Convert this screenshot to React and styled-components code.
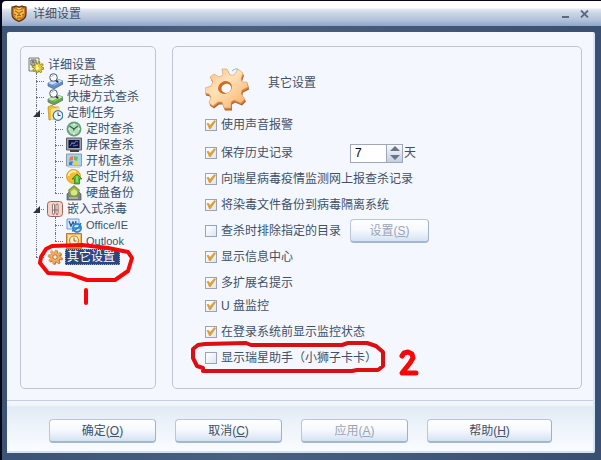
import React, { useState } from "react";
import styled, { createGlobalStyle, css } from "styled-components";

const ink = "#3f5068";
const faded = "#9aa5b6";
const line = "#c0c4d6";

const GlobalStyle = createGlobalStyle`
  *, *::before, *::after { box-sizing: border-box; }
  body {
    margin: 0;
    background: #06061a;
    color: ${ink};
    font: 12px/16px "Liberation Sans", "Noto Sans CJK SC", sans-serif;
  }
  button, input { font: inherit; color: inherit; }
`;

const Window = styled.div`
  display: flex;
  flex-direction: column;
  min-height: 100vh;
  padding-top: 1px;
`;

const TitleBar = styled.header`
  display: flex;
  align-items: center;
  gap: 6px;
  height: 25px;
  margin-left: 2px;
  padding: 0 11px 0 9px;
  border-radius: 4px 0 0 0;
  background: linear-gradient(#ffffff 0, #ffffff 7px, #e4e9f2 8px, #ccd5e5 12px, #b3c2d9 19px, #8ea7ca 25px);
`;

const TitleText = styled.h1`
  flex: 1;
  margin: 0;
  font-size: 12px;
  font-weight: normal;
`;

const CaptionButton = styled.button`
  display: grid;
  place-items: center;
  width: 12px;
  height: 16px;
  padding: 0;
  border: 0;
  background: none;
`;

const Frame = styled.div`
  flex: 1;
  display: flex;
  flex-direction: column;
  padding: 6px 6px 7px 5px;
  margin-left: 2px;
  background: linear-gradient(90deg, #3d5373, #49607f 40%, #3b5070);
`;

const Sheet = styled.main`
  flex: 1;
  display: flex;
  flex-direction: column;
  border-radius: 2px;
  border-right: 2px solid #d3e7fa;
  background: #f4f8fe;
`;

const Columns = styled.div`
  flex: 1;
  display: flex;
  gap: 16px;
  padding: 14px 11px 11px 13px;
`;

const Sidebar = styled.nav`
  flex: 0 0 136px;
  padding: 10px 7px;
  border: 1px solid ${line};
  border-radius: 5px;
`;

const Panel = styled.section`
  flex: 1;
  min-width: 0;
  padding: 21px 0 19px 32px;
  border: 1px solid ${line};
  border-radius: 5px;
`;

const TreeList = styled.ul`
  list-style: none;
  margin: 0;
  margin-left: ${(p) => (p.$level === 0 ? 0 : p.$level === 1 ? 8 : 19)}px;
  padding: 0;
`;

const TreeItem = styled.li`
  position: relative;
  ${(p) => p.$level > 0 && css`
    &::before {
      content: "";
      position: absolute;
      left: 0;
      top: 0;
      bottom: 0;
      border-left: 1px dotted #6d7585;
    }
    &:last-child::before { bottom: auto; height: 8px; }
    > div::before {
      content: "";
      flex: 0 0 8px;
      margin-right: 3px;
      border-top: 1px dotted #6d7585;
    }
  `}
`;

const TreeRow = styled.div`
  position: relative;
  display: flex;
  align-items: center;
  height: 16px;
  white-space: nowrap;
`;

const TreeLabel = styled.a`
  height: 16px;
  margin-left: 2px;
  padding: 0 2px;
  color: inherit;
  text-decoration: none;
  font-size: ${(p) => (p.$latin ? 11 : 12)}px;
  ${(p) => p.$selected && css`
    padding-right: 5px;
    color: #fff;
    background: #2b4680;
    outline: 1px dotted #b4a87b;
    outline-offset: -1px;
  `}
`;

const Expander = styled.button`
  position: absolute;
  left: -3px;
  top: 5px;
  width: 7px;
  height: 7px;
  padding: 0;
  border: 0;
  background: #2d333e;
  clip-path: polygon(100% 0, 100% 100%, 0 100%);
`;

const PanelHead = styled.div`
  display: flex;
  gap: 18px;
  height: 42px;
  margin-bottom: 4px;
`;

const PanelTitle = styled.h2`
  margin: 0;
  font-size: 12px;
  font-weight: normal;
  line-height: 30px;
`;

const OptionGroup = styled.div`
  display: flex;
  flex-direction: column;
  gap: 4px;
  margin-top: ${(p) => p.$space}px;
`;

const OptionRow = styled.div`
  position: relative;
  display: flex;
  align-items: center;
  height: 22px;
  white-space: nowrap;
`;

const Option = styled.label`
  display: flex;
  align-items: center;
  gap: 4px;
  min-width: 145px;
`;

const CheckBox = styled.input`
  appearance: none;
  display: block;
  width: 12px;
  height: 12px;
  margin: 0;
  border: 1px solid #9aa3bb;
  background: linear-gradient(135deg, #ffffff, #dfe6f1);
  &:checked::after {
    content: "";
    display: block;
    width: 10px;
    height: 9px;
    background: #dca13c;
    clip-path: polygon(5% 36%, 26% 32%, 40% 56%, 85% 0, 100% 14%, 46% 100%, 32% 100%);
  }
`;

const Spinner = styled.span`
  display: flex;
  width: 53px;
  height: 19px;
  margin-right: 1px;
  border: 1px solid #a0a7bd;
  background: #fff;
`;

const SpinnerInput = styled.input`
  flex: 1;
  min-width: 0;
  padding: 0 4px;
  border: 0;
  outline: 0;
  background: none;
  color: #000;
`;

const Steps = styled.span`
  display: flex;
  flex-direction: column;
  width: 16px;
  border-left: 1px solid #a0a7bd;
  background: linear-gradient(#f8fafd, #c3cfe0);
`;

const Step = styled.button`
  flex: 1;
  display: grid;
  place-items: center;
  padding: 0;
  border: 0;
  background: none;
  &::after {
    content: "";
    border: 5px solid transparent;
    border-top-width: ${(p) => (p.$up ? 0 : 5)}px;
    border-bottom-width: ${(p) => (p.$up ? 5 : 0)}px;
    border-${(p) => (p.$up ? "bottom" : "top")}-color: #66748c;
  }
`;

const Button = styled.button`
  flex: 0 1 ${(p) => p.$width || 107}px;
  height: 24px;
  padding: 0 4px;
  border: 1px solid #b9c7dc;
  border-right-color: #9fb0c9;
  border-bottom: 2px solid #a5b6cf;
  border-radius: 4px;
  background: linear-gradient(#ffffff, #f5f8fd 50%, #d5e2f2);
  white-space: nowrap;
  line-height: 16px;
  &:disabled { color: ${faded}; }
`;

const Footer = styled.footer`
  display: flex;
  gap: 19px;
  padding: 18px 41px 8px 42px;
  border-top: 1px solid #c3cee0;
  border-bottom: 2px solid #d5e2f0;
  background: linear-gradient(#f2f7fd 0, #f2f7fd 4px, #e1eaf5 6px, #edf3fa 25px, #fafcff 50px);
`;

const Marker = styled.svg`
  position: absolute;
  left: ${(p) => p.$left}px;
  top: ${(p) => p.$top}px;
  z-index: 2;
  pointer-events: none;
  fill: none;
  stroke-linecap: round;
  stroke-linejoin: round;
`;

const Glyph = styled.svg`
  flex: none;
  display: block;
`;

const gearPath = (cx, cy, outer, inner, teeth, turn = 0) => {
  const pts = [];
  const step = (Math.PI * 2) / teeth;
  for (let i = 0; i < teeth; i++) {
    [[-0.32, inner], [-0.2, outer], [0.2, outer], [0.32, inner]].forEach(([o, r]) => {
      const a = (i + o) * step + turn;
      pts.push(`${(cx + r * Math.cos(a)).toFixed(1)} ${(cy + r * Math.sin(a)).toFixed(1)}`);
    });
  }
  return `M${pts.join("L")}Z`;
};

function Drive({ base, top }) {
  return (
    <>
      <path d="M1 10L10 6L16 8V11L7 16L1 13Z" fill={base} stroke="#53677c" strokeWidth=".7" />
      <path d="M1 10L10 6L16 8L7 12.5Z" fill={top} />
      <path d="M4 13L12 9" stroke={base} />
      <path d="M8.5 7L11 9" stroke="#252c38" strokeWidth="1.8" />
      <circle cx="6.5" cy="4.5" r="3.8" fill="#f8fcff" stroke="#4d5966" />
      <path d="M4.5 4Q5 2 7 2" stroke="#a1c4df" fill="none" />
    </>
  );
}

const art = {
  root: (
    <>
      <path d="M1 1H11V14H1Z" fill="#ecefdd" stroke="#777c77" />
      <path d="M3 3H8V8H3Z" fill="#fff" stroke="#4c5863" />
      <path d="M4 5H7M5 3V7" stroke="#555" />
      <path d={gearPath(10, 10.5, 5.8, 3.8, 8, 0.2)} fill="#e7cf2c" stroke="#756813" strokeWidth=".7" />
      <path d="M9 8V12L11 11" stroke="#fffbd0" fill="none" strokeWidth="1.5" />
    </>
  ),
  manual: <Drive base="#628bcb" top="#c6dffa" />,
  quick: <Drive base="#63a847" top="#c8e8a6" />,
  tasks: (
    <>
      <path d="M1 2L5 0L7 2H12V13L2 15Z" fill="#f2bf35" stroke="#b98416" strokeWidth=".7" />
      <path d="M4 4L13 2V12L4 15Z" fill="#ffe47f" />
      <circle cx="11" cy="10.5" r="4.8" fill="#e9f5ff" stroke="#3c73b1" strokeWidth="1.2" />
      <path d="M11 7.5V10.5H13.5" stroke="#28446c" fill="none" />
    </>
  ),
  clock: (
    <>
      <circle cx="8" cy="8" r="7.5" fill="#6aa57c" />
      <circle cx="8" cy="8" r="6" fill="#b9dcc1" stroke="#479363" strokeWidth=".6" />
      <path d="M3.5 5L8 8L12 5M8 8L7.5 9.5" stroke="#2d6744" strokeWidth="1.3" fill="none" />
      <path d="M8 2.5V4M8 12V14M2.5 8H4M12 8H14" stroke="#fff" />
    </>
  ),
  screen: (
    <>
      <path d="M.5 1H15.5V13H.5Z" fill="#9fa4ab" stroke="#5b606c" />
      <path d="M2.5 3H13.5V11H2.5Z" fill="#11143b" />
      <path d="M4 9L6 6L8 7L10 4L12 5M5 6H9M7 9L12 8" stroke="#6576d5" fill="none" />
      <path d="M4 14H13" stroke="#40434a" strokeWidth="2" />
    </>
  ),
  boot: (
    <>
      <path d="M.5 1H15.5V13H.5Z" fill="#a9d2f1" stroke="#8d9aab" />
      <path d="M4 4L7 3L7 7L3 8Z" fill="#eb7652" /><path d="M8 3L12 4L11 8L8 7Z" fill="#75b75b" />
      <path d="M3 9L7 8L6 12L3 12Z" fill="#3980cf" /><path d="M8 8L11 9L11 12L7 12Z" fill="#f0cb52" />
      <path d="M2 14H14" stroke="#d1d7de" strokeWidth="2" />
    </>
  ),
  update: (
    <>
      <circle cx="7.5" cy="7.5" r="7" fill="#f4bc32" stroke="#c48917" strokeWidth=".7" />
      <path d="M2.5 7A5 5 0 0 1 10 3" stroke="#fff0a1" strokeWidth="2" fill="none" />
      <path d="M11 5L16 10H13.5V15H8.5V10H6Z" fill="#55bd35" stroke="#2d751d" strokeWidth=".7" />
      <path d="M11 7V13" stroke="#baf197" />
    </>
  ),
  backup: (
    <>
      <path d="M1 9L4 6H12L15 9V15H1Z" fill="#7b8185" stroke="#4b5557" strokeWidth=".7" />
      <path d="M8 0L14 5L11 12L4 12L2 5Z" fill="#7f9e3b" />
      <circle cx="8" cy="7" r="3.5" fill="#d8e58d" /><path d="M4 6L8 3L12 6" stroke="#a9b548" strokeWidth="1.6" fill="none" />
      <path d="M3 13H12" stroke="#d5dad4" />
    </>
  ),
  embed: (
    <>
      <rect x=".5" y=".5" width="15" height="15" rx="3" fill="#f4d4c9" stroke="#9e6659" />
      <path d="M5.5 3.5Q6.5 2.5 7.5 3.5V12L6.5 14L5.5 12Z" fill="#fff" stroke="#7d5c5c" strokeWidth=".8" />
      <path d="M9 3.5Q10 2.5 11 3.5V12L10 14L9 12Z" fill="#fff" stroke="#7d5c5c" strokeWidth=".8" />
      <path d="M5 9H11.5" stroke="#7d5c5c" strokeWidth=".8" />
    </>
  ),
  office: (
    <>
      <path d="M1 2H13V12H1Z" fill="#d9ebff" stroke="#7397c5" />
      <path d="M3 4L5 9L7 5L9 9L10 4" stroke="#2a579e" strokeWidth="1.4" fill="none" />
      <circle cx="11" cy="11" r="4" fill="#dceeff" stroke="#348bd5" strokeWidth="2" /><path d="M8 11H14M6 14Q12 13 15 6" stroke="#267dca" strokeWidth="1.4" fill="none" />
    </>
  ),
  outlook: (
    <>
      <path d="M.5 .5H15.5V15.5H.5Z" fill="#efb45c" stroke="#b77c32" />
      <path d="M2 2H14V13H2Z" fill="#fbe2a7" />
      <circle cx="8" cy="7.5" r="4.5" fill="#fff1d1" stroke="#c78435" strokeWidth="1.2" />
      <path d="M8 4.5V8H10.5" stroke="#9b5e24" fill="none" />
    </>
  ),
  gear: (
    <>
      <path d={gearPath(8.8, 8.8, 7, 5, 8, 0.2)} fill="#b96628" />
      <path d={gearPath(8, 8, 7, 5, 8, 0.2)} fill="#f0ab5d" stroke="#d98136" strokeWidth=".5" />
      <circle cx="8" cy="8" r="2.2" fill="#fff7ec" stroke="#bd6f2e" />
    </>
  ),
};

const TreeIcon = ({ name }) => (
  <Glyph width="16" height="16" viewBox="0 0 16 16" aria-hidden="true">{art[name]}</Glyph>
);

const Shield = () => (
  <Glyph width="16" height="17" viewBox="0 0 16 17" aria-hidden="true">
    <path d="M1 2Q4 2 5 1L8 2L11 1Q12 2 15 2V9Q15 14 8 16.5Q1 14 1 9Z" fill="#d47c1c" stroke="#5b3514" strokeWidth="1.2" />
    <path d="M3 4L6 5H10L13 4V9L10 13L8 15L5 13L3 9Z" fill="#f5ba45" />
    <path d="M4 6L7 7.5M12 6L9 7.5M8 7V10M6 11L8 10L10 11M6 13H10M3 9L5 10M13 9L11 10" stroke="#8a4a17" fill="none" strokeWidth=".9" />
    <path d="M6 3L8 4L10 3" stroke="#ffe39b" fill="none" />
  </Glyph>
);

const BigGear = () => {
  const body = "M17 1L22 1L25 7L29 7L33 1L38 5L36 11L37 14L42 14L43 19L37 22L36 26L40 31L36 35L29 32L26 34L26 40L19 40L17 34L13 34L8 38L4 35L6 29L4 26L0 25L0 20L6 18L8 14L5 9L9 6L14 9L18 7Z";
  return (
    <Glyph width="45" height="43" viewBox="0 0 45 43" aria-hidden="true">
      <defs>
        <linearGradient id="gearFace" x1="0" y1="0" x2="1" y2="1">
          <stop offset="0" stopColor="#f9bd79" />
          <stop offset=".4" stopColor="#ffe2b9" />
          <stop offset=".7" stopColor="#fcca90" />
          <stop offset="1" stopColor="#f0a35c" />
        </linearGradient>
      </defs>
      <path d={body} fill="#a85c30" transform="translate(1 2.5)" />
      <path d={body} fill="#dc7c33" transform="translate(.5 1.5)" />
      <path d={body} fill="url(#gearFace)" stroke="#dc9a5f" strokeWidth=".6" />
      <ellipse cx="20" cy="19.5" rx="7.2" ry="6.2" fill="#cf6d2a" transform="rotate(-30 20 19.5)" />
      <ellipse cx="21.3" cy="20.3" rx="5" ry="4.5" fill="#f6f8fc" transform="rotate(-30 21.3 20.3)" />
      <path d="M27 3L30 1L33 1" stroke="#69c4dc" fill="none" />
    </Glyph>
  );
};

const ItemMark = () => (
  <Marker $left={-2} $top={-8} width="102" height="70" viewBox="34 241 102 70" stroke="#f50808" strokeWidth="4" aria-hidden="true">
    <path d="M52 246L46 249L41 257L40 263L48 273L70 274L78 277L87 280H115L128 271L132 258L128 252L108 248L82 245Z" />
    <path d="M86 290V303" />
  </Marker>
);

const OptionMark = () => (
  <Marker $left={-16} $top={-9} width="234" height="42" viewBox="189 338 234 42" strokeWidth="4" aria-hidden="true">
    <path d="M205 344L246 343L251 345H342L348 343H367L376 346L383 352V366L378 370H357L352 371H203V368L197 366L193 358V349L198 345Z" stroke="#d90f14" />
    <path d="M402 356L404 353L408 352L412 354L413 358L410 363L402 373L416 373" stroke="#f50808" strokeWidth="5" />
  </Marker>
);

const tree = [
  { label: "详细设置", icon: "root", children: [
    { label: "手动查杀", icon: "manual" },
    { label: "快捷方式查杀", icon: "quick" },
    { label: "定制任务", icon: "tasks", children: [
      { label: "定时查杀", icon: "clock" },
      { label: "屏保查杀", icon: "screen" },
      { label: "开机查杀", icon: "boot" },
      { label: "定时升级", icon: "update" },
      { label: "硬盘备份", icon: "backup" },
    ] },
    { label: "嵌入式杀毒", icon: "embed", children: [
      { label: "Office/IE", icon: "office", latin: true },
      { label: "Outlook", icon: "outlook", latin: true },
    ] },
    { label: "其它设置", icon: "gear", selected: true },
  ] },
];

function Tree({ nodes, level = 0 }) {
  return (
    <TreeList $level={level}>
      {nodes.map((n) => (
        <TreeItem key={n.label} $level={level}>
          <TreeRow>
            {level > 0 && n.children && <Expander aria-label={`折叠${n.label}`} />}
            <TreeIcon name={n.icon} />
            <TreeLabel href="#" $latin={n.latin} $selected={n.selected} aria-current={n.selected ? "page" : undefined}>{n.label}</TreeLabel>
            {n.selected && <ItemMark />}
          </TreeRow>
          {n.children && <Tree nodes={n.children} level={level + 1} />}
        </TreeItem>
      ))}
    </TreeList>
  );
}

function DaysField() {
  const [days, setDays] = useState(7);
  return (
    <>
      <Spinner>
        <SpinnerInput id="days" inputMode="numeric" value={days} onChange={(e) => setDays(Number(e.target.value) || 0)} />
        <Steps>
          <Step $up aria-label="增加" onClick={() => setDays(days + 1)} />
          <Step aria-label="减少" onClick={() => setDays(Math.max(0, days - 1))} />
        </Steps>
      </Spinner>
      <label htmlFor="days">天</label>
    </>
  );
}

const groups = [
  { space: 0, options: [{ label: "使用声音报警", on: true }] },
  { space: 6, options: [
    { label: "保存历史记录", on: true, extra: <DaysField /> },
    { label: "向瑞星病毒疫情监测网上报查杀记录", on: true },
    { label: "将染毒文件备份到病毒隔离系统", on: true },
    { label: "查杀时排除指定的目录", on: false, extra: <Button $width={79} disabled>设置(<u>S</u>)</Button> },
    { label: "显示信息中心", on: true },
    { label: "多扩展名提示", on: true },
  ] },
  { space: 1, options: [
    { label: "U 盘监控", on: true },
    { label: "在登录系统前显示监控状态", on: true },
    { label: "显示瑞星助手（小狮子卡卡）", on: false, extra: <OptionMark /> },
  ] },
];

export default function App() {
  return (
    <Window>
      <GlobalStyle />
      <TitleBar>
        <Shield />
        <TitleText>详细设置</TitleText>
        <CaptionButton aria-label="最小化">
          <svg width="8" height="8" viewBox="0 0 8 8"><path d="M0 7H7" stroke="#596a84" strokeWidth="2" /></svg>
        </CaptionButton>
        <CaptionButton aria-label="关闭">
          <svg width="9" height="8" viewBox="0 0 9 8"><path d="M1 .5L8 7.5M8 .5L1 7.5" stroke="#596a84" strokeWidth="1.8" /></svg>
        </CaptionButton>
      </TitleBar>
      <Frame>
        <Sheet>
          <Columns>
            <Sidebar><Tree nodes={tree} /></Sidebar>
            <Panel>
              <PanelHead><BigGear /><PanelTitle>其它设置</PanelTitle></PanelHead>
              {groups.map((g) => (
                <OptionGroup key={g.space} $space={g.space}>
                  {g.options.map((o) => (
                    <OptionRow key={o.label}>
                      <Option><CheckBox type="checkbox" defaultChecked={o.on} />{o.label}</Option>
                      {o.extra}
                    </OptionRow>
                  ))}
                </OptionGroup>
              ))}
            </Panel>
          </Columns>
          <Footer>
            <Button>确定(<u>O</u>)</Button>
            <Button>取消(<u>C</u>)</Button>
            <Button disabled>应用(<u>A</u>)</Button>
            <Button $width={125}>帮助(<u>H</u>)</Button>
          </Footer>
        </Sheet>
      </Frame>
    </Window>
  );
}
